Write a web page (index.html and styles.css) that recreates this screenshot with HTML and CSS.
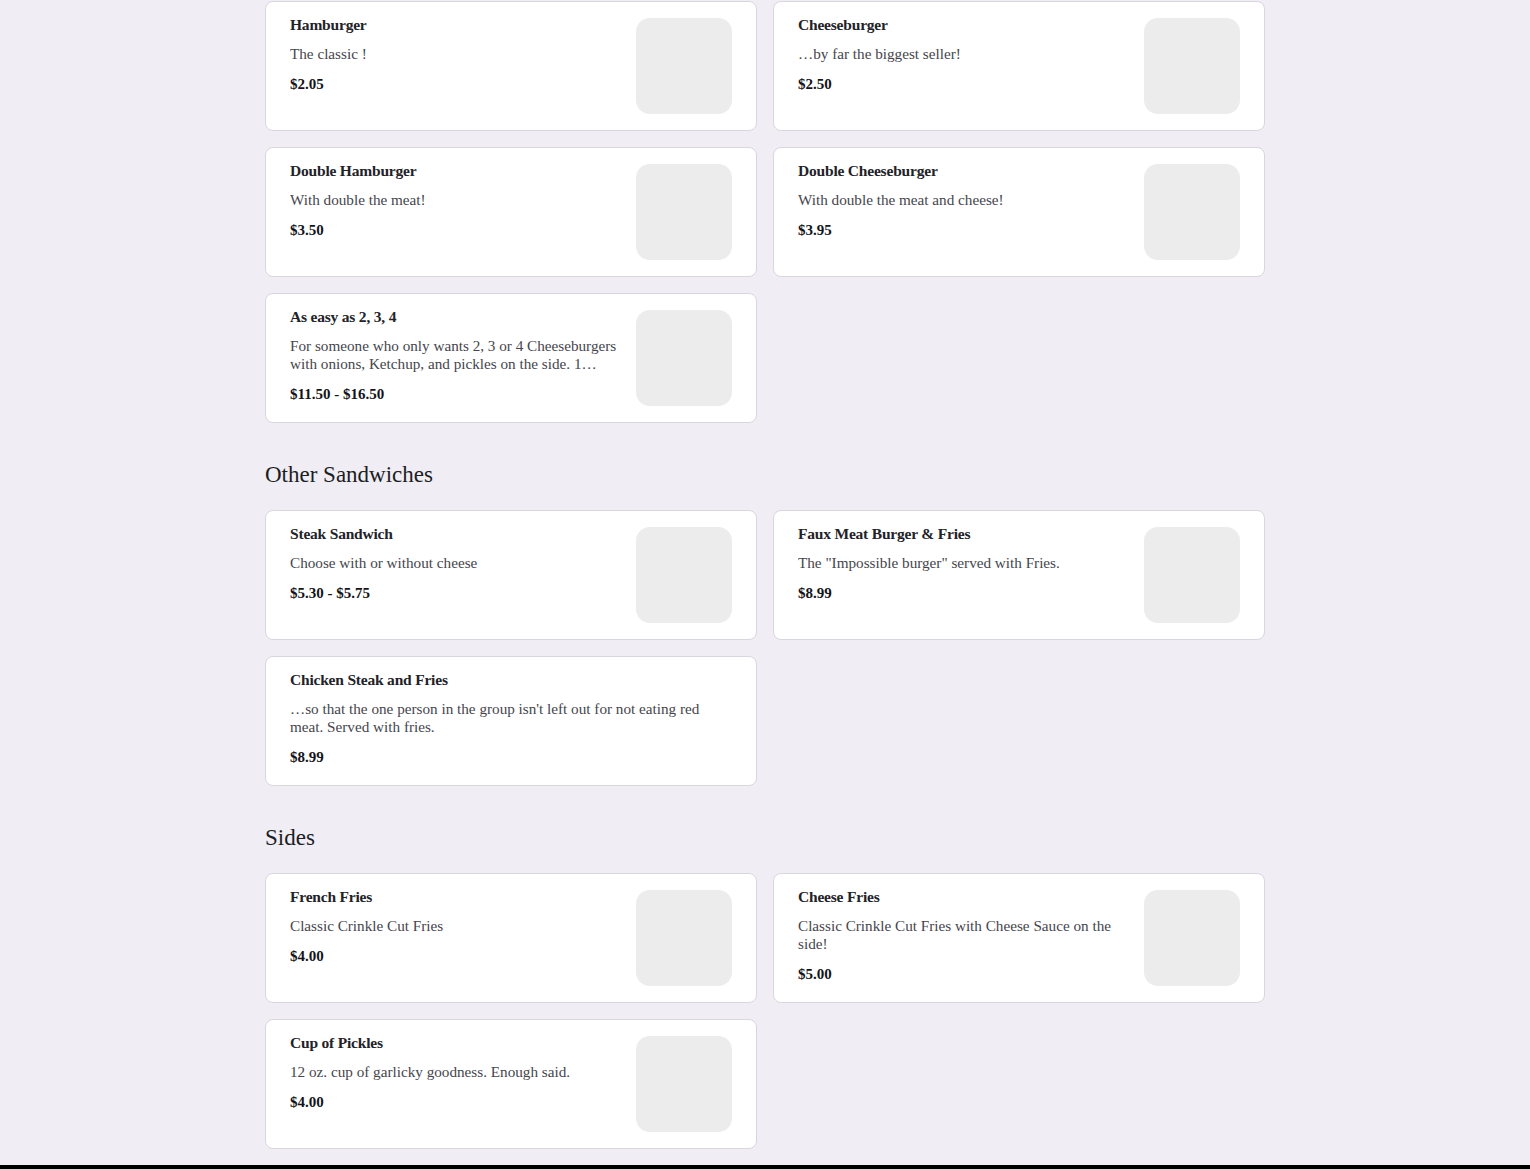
FILE: index.html
```html
<!DOCTYPE html>
<html lang="en">
<head>
<meta charset="utf-8">
<title>Menu</title>
<link rel="stylesheet" href="styles.css">
</head>
<body>
<main class="menu">
  <section class="section">
    <div class="grid">
      <article class="card">
        <div class="info">
          <h3 class="name">Hamburger</h3>
          <p class="desc">The classic !</p>
          <p class="price">$2.05</p>
        </div>
        <div class="thumb"></div>
      </article>
      <article class="card">
        <div class="info">
          <h3 class="name">Cheeseburger</h3>
          <p class="desc">…by far the biggest seller!</p>
          <p class="price">$2.50</p>
        </div>
        <div class="thumb"></div>
      </article>
      <article class="card">
        <div class="info">
          <h3 class="name">Double Hamburger</h3>
          <p class="desc">With double the meat!</p>
          <p class="price">$3.50</p>
        </div>
        <div class="thumb"></div>
      </article>
      <article class="card">
        <div class="info">
          <h3 class="name">Double Cheeseburger</h3>
          <p class="desc">With double the meat and cheese!</p>
          <p class="price">$3.95</p>
        </div>
        <div class="thumb"></div>
      </article>
      <article class="card">
        <div class="info">
          <h3 class="name">As easy as 2, 3, 4</h3>
          <p class="desc">For someone who only wants 2, 3 or 4 Cheeseburgers with onions, Ketchup, and pickles on the side. 1…</p>
          <p class="price">$11.50 - $16.50</p>
        </div>
        <div class="thumb"></div>
      </article>
    </div>
  </section>

  <section class="section">
    <h2 class="heading">Other Sandwiches</h2>
    <div class="grid">
      <article class="card">
        <div class="info">
          <h3 class="name">Steak Sandwich</h3>
          <p class="desc">Choose with or without cheese</p>
          <p class="price">$5.30 - $5.75</p>
        </div>
        <div class="thumb"></div>
      </article>
      <article class="card">
        <div class="info">
          <h3 class="name">Faux Meat Burger &amp; Fries</h3>
          <p class="desc">The "Impossible burger" served with Fries.</p>
          <p class="price">$8.99</p>
        </div>
        <div class="thumb"></div>
      </article>
      <article class="card">
        <div class="info">
          <h3 class="name">Chicken Steak and Fries</h3>
          <p class="desc">…so that the one person in the group isn't left out for not eating red meat. Served with fries.</p>
          <p class="price">$8.99</p>
        </div>
      </article>
    </div>
  </section>

  <section class="section">
    <h2 class="heading">Sides</h2>
    <div class="grid">
      <article class="card">
        <div class="info">
          <h3 class="name">French Fries</h3>
          <p class="desc">Classic Crinkle Cut Fries</p>
          <p class="price">$4.00</p>
        </div>
        <div class="thumb"></div>
      </article>
      <article class="card">
        <div class="info">
          <h3 class="name">Cheese Fries</h3>
          <p class="desc">Classic Crinkle Cut Fries with Cheese Sauce on the side!</p>
          <p class="price">$5.00</p>
        </div>
        <div class="thumb"></div>
      </article>
      <article class="card">
        <div class="info">
          <h3 class="name">Cup of Pickles</h3>
          <p class="desc">12 oz. cup of garlicky goodness. Enough said.</p>
          <p class="price">$4.00</p>
        </div>
        <div class="thumb"></div>
      </article>
    </div>
  </section>
</main>
<footer class="footer"></footer>
</body>
</html>
```

FILE: styles.css
```css
* {
  box-sizing: border-box;
}

html, body {
  margin: 0;
  padding: 0;
}

body {
  background: #f0eef4;
  font-family: "Liberation Serif", "DejaVu Serif", serif;
  color: #222;
}

.menu {
  width: 1000px;
  margin: 0 auto;
  padding-top: 1px;
  padding-bottom: 16px;
}

.heading {
  margin: 37px 0 20px;
  font-family: "Liberation Serif", serif;
  font-weight: 400;
  font-size: 23px;
  line-height: 30px;
  color: #1d1d24;
}

.grid {
  display: grid;
  grid-template-columns: 492px 492px;
  gap: 16px;
}

.card {
  display: flex;
  gap: 16px;
  min-height: 130px;
  padding: 16px 24px;
  background: #fff;
  border: 1px solid #d9d7dd;
  border-radius: 8px;
}

.info {
  flex: 1;
  min-width: 0;
}

.name {
  margin: -1px 0 0;
  font-family: "Liberation Serif", serif;
  font-weight: 700;
  font-size: 15.5px;
  line-height: 16px;
  color: #222228;
  letter-spacing: -0.2px;
}

.desc {
  margin: 12px 0 0;
  font-size: 15.2px;
  line-height: 18px;
  color: #45454c;
  display: -webkit-box;
  -webkit-line-clamp: 2;
  -webkit-box-orient: vertical;
  overflow: hidden;
}

.price {
  margin: 12px 0 0;
  font-size: 15px;
  font-weight: 700;
  line-height: 18px;
  color: #141418;
}

.thumb {
  flex: none;
  width: 96px;
  height: 96px;
  border-radius: 14px;
  background: #ececec;
}

.footer {
  height: 120px;
  background: #000;
}
```
